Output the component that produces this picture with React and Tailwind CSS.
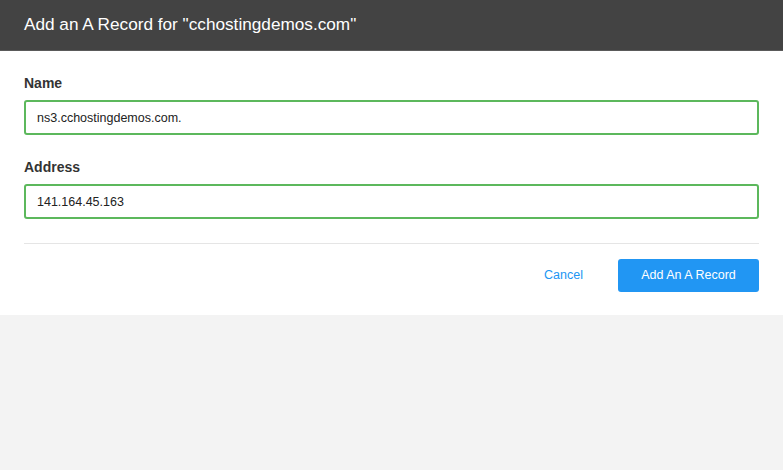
// Add A record dialog

export default function App() {
  return (
    <div
      className="w-[783px] h-[470px] bg-[#f3f3f3]"
      style={{ fontFamily: '"Liberation Sans", Arial, sans-serif' }}
    >
      {/* ── Header ── */}
      <div className="h-[51px] bg-[#434343] border-b border-[#5a5a5a] flex items-center px-6">
        <h1 className="text-[17.2px] text-white leading-none">Add an A Record for "cchostingdemos.com"</h1>
      </div>

      {/* ── Form ── */}
      <div className="bg-white px-6 pt-[22px] pb-[23px]">
        <div className="flex flex-col">
          <label className="text-[14px] font-bold text-[#333] leading-5">Name</label>
          <input
            defaultValue="ns3.cchostingdemos.com."
            className="mt-[7px] h-[35px] w-full rounded-[3px] border-2 border-[#5cb85c] px-[11px] text-[12.5px] text-[#222] outline-none"
          />
        </div>

        <div className="flex flex-col mt-[22px]">
          <label className="text-[14px] font-bold text-[#333] leading-5">Address</label>
          <input
            defaultValue="141.164.45.163"
            className="mt-[7px] h-[35px] w-full rounded-[3px] border-2 border-[#5cb85c] px-[11px] text-[12.5px] text-[#222] outline-none"
          />
        </div>

        <div className="mt-6 border-t border-[#e5e5e5]" />

        <div className="flex justify-end items-center gap-[35px] mt-[15px]">
          <button className="text-[12.5px] text-[#2196f3]">Cancel</button>
          <button className="h-[33px] w-[141px] rounded-[3px] bg-[#2196f3] text-white text-[12.5px]">
            Add An A Record
          </button>
        </div>
      </div>
    </div>
  )
}
